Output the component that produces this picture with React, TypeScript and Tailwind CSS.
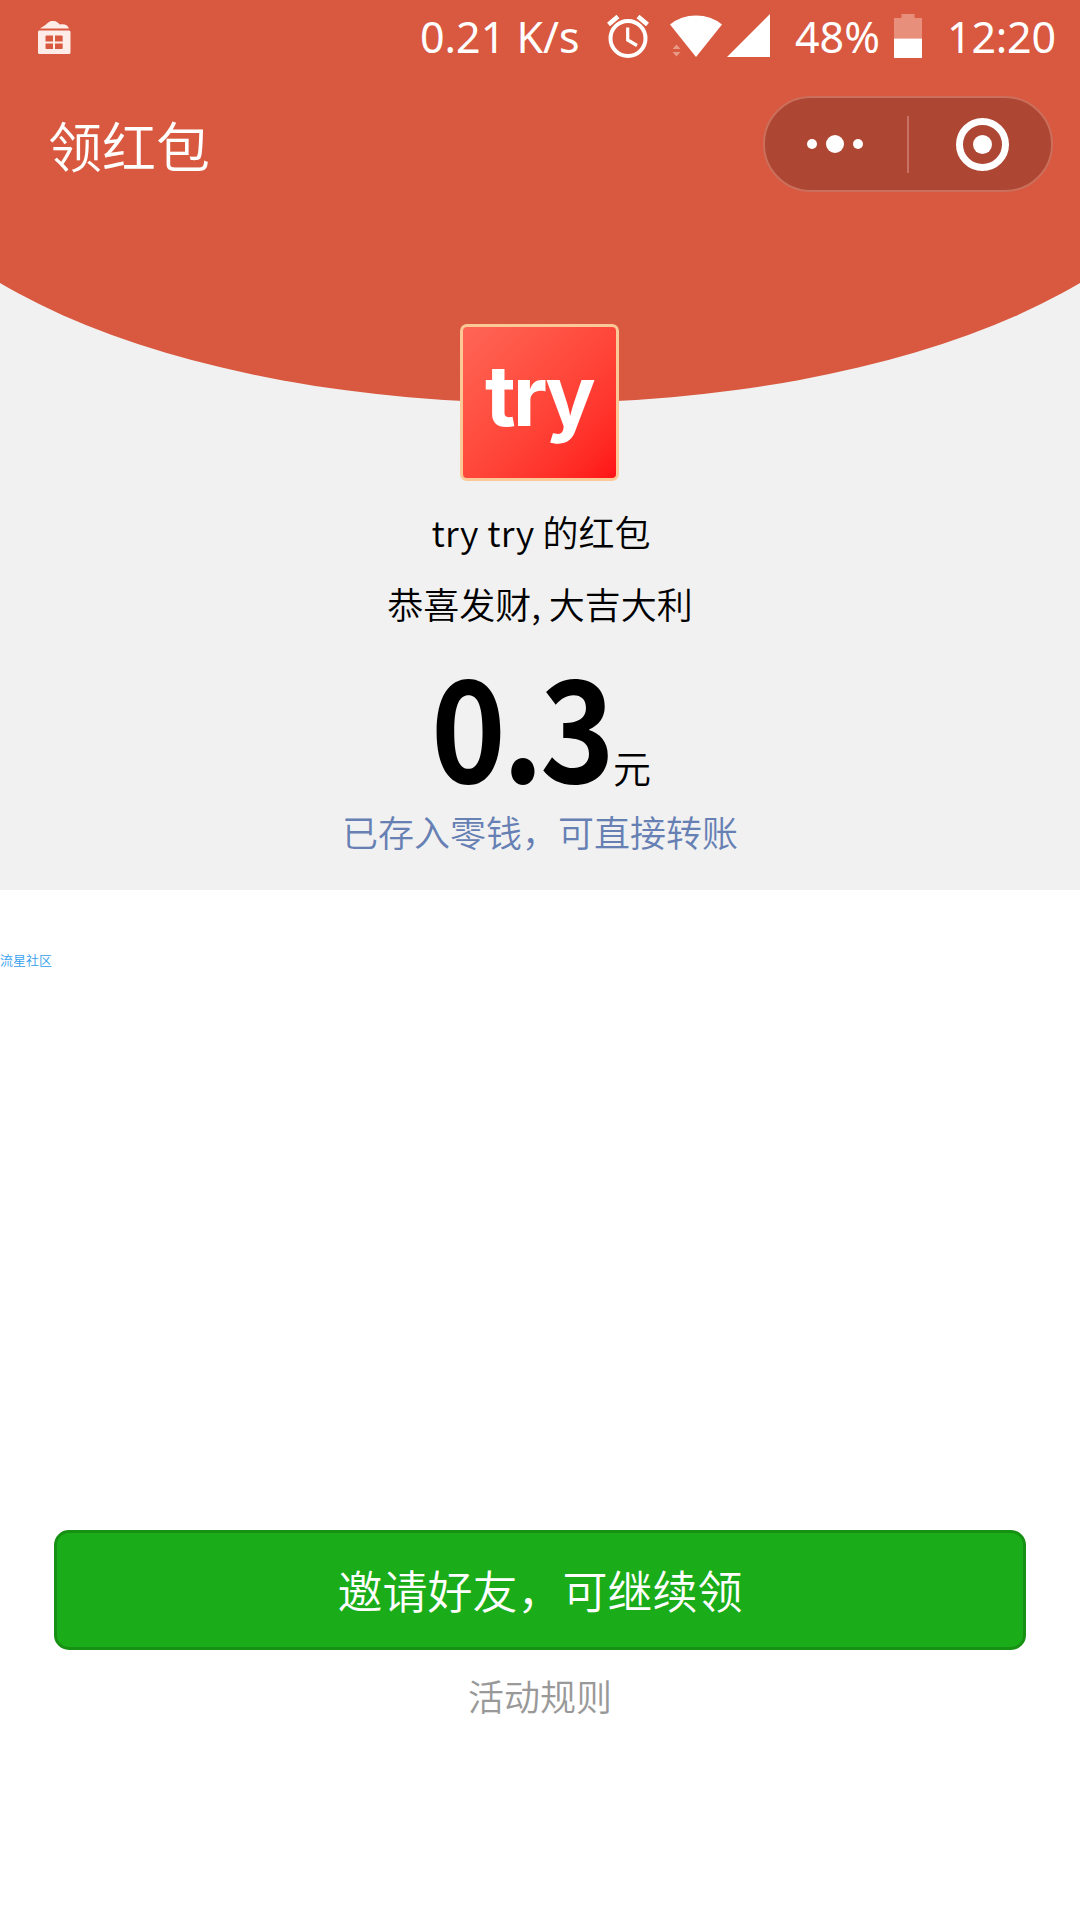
import React from "react";

function StatusBar() {
  return (
    <div className="flex h-[73px] items-center text-[43px] font-normal leading-none text-white font-['Noto_Sans',sans-serif]">
      <svg className="ml-[37px] h-[36px] w-[34px]" viewBox="0 0 34 36" fill="#fdece8">
        <path d="M3 9.500L8 6.200C11 4 12 2 16 2C20 2 21 4 23 5.600C27 4.500 31 6 32 9.500Z" />
        <path
          fillRule="evenodd"
          d="M2 11.500H32Q33.500 11.500 33.500 13V33.500Q33.500 35 32 35H2.500Q1 35 1 33.500V13Q1 11.500 2 11.500ZM9.500 16.500Q8.500 16.500 8.500 17.500V22.500H16V16.500ZM18 16.500V22.500H25.700V17.500Q25.700 16.500 24.700 16.500ZM8.500 24.500V29Q8.500 30 9.500 30H16V24.500ZM18 24.500V30H24.700Q25.700 30 25.700 29V24.500Z"
        />
      </svg>
      <span className="ml-[349px] w-[163px] whitespace-nowrap">0.21 K/s</span>
      <svg className="-mt-[2px] ml-[24px] h-[44px] w-[42px]" viewBox="0 0 42 44" fill="none" stroke="#fff">
        <circle cx="21" cy="24.500" r="17.500" strokeWidth="4" />
        <path d="M1.500 10.500L11 2.500M31 2.500L40.500 10.500" strokeWidth="4.500" />
        <path d="M20.700 13.500V26L30 31.500" strokeWidth="3.200" />
      </svg>
      <svg className="-mt-[2px] ml-[19px] h-[44px] w-[54px]" viewBox="0 0 54 44" fill="#fff">
        <path d="M2 10.500Q13 1.500 28 1.500Q43 1.500 54 10.500L28 43Z" />
        <path d="M4.500 35L8.500 30.500L12.500 35ZM4.500 38H12.500L8.500 42.500Z" fill="#e99a87" />
      </svg>
      <svg className="-mt-[2px] ml-[5px] h-[43px] w-[43px]" viewBox="0 0 43 43" fill="#fff">
        <path d="M0 43L43 0V43Z" />
      </svg>
      <span className="ml-[25px] w-[87px] whitespace-nowrap">48%</span>
      <svg className="-mt-[2px] ml-[12px] h-[44px] w-[28px]" viewBox="0 0 28 44">
        <path d="M7.500 0H20.500V4H28V24.500H0V4H7.500Z" fill="#e88f7b" />
        <path d="M0 24.500H28V44H0Z" fill="#fff" />
      </svg>
      <span className="ml-[25px] whitespace-nowrap tracking-[-0.2px]">12:20</span>
    </div>
  );
}

function Capsule() {
  return (
    <div className="flex h-[96px] w-[290px] items-center rounded-full border-2 border-[#cb6f5c] bg-[#ad4633]">
      <div className="flex w-[142px] items-center justify-center gap-[9px] pr-[2px]">
        <i className="size-[10px] rounded-full bg-white" />
        <i className="size-[18px] rounded-full bg-white" />
        <i className="size-[10px] rounded-full bg-white" />
      </div>
      <div className="h-[57px] w-[2px] bg-[#c77262]" />
      <div className="flex flex-1 justify-center pl-[5px]">
        <div className="flex size-[53px] items-center justify-center rounded-full border-[7px] border-white">
          <i className="size-[19px] rounded-full bg-white" />
        </div>
      </div>
    </div>
  );
}

export default function App() {
  return (
    <div className="flex h-[1920px] w-[1080px] flex-col overflow-hidden bg-white font-['Noto_Sans_CJK_SC',sans-serif] text-[36px] font-[350] text-black">
      <section className="flex h-[890px] shrink-0 flex-col items-center bg-[#f1f1f1]">
        <header className="h-[403px] w-[1350px] shrink-0 rounded-b-[675px_300px] bg-[#d8593f] px-[135px]">
          <StatusBar />
          <div className="mt-[23px] flex items-center justify-between pl-[48px] pr-[27px]">
            <h1 className="pt-[2px] text-[54px] leading-none text-white">领红包</h1>
            <Capsule />
          </div>
        </header>
        <div className="-mt-[79px] mr-[2px] flex h-[157px] w-[159px] shrink-0 items-center justify-center rounded-[7px] border-[3px] border-[#fbc997] bg-linear-to-br from-[#ff6555] to-[#ff1015]">
          <span className="pb-[14px] font-['Inter',sans-serif] text-[84px] font-bold leading-none tracking-[-3px] text-white">try</span>
        </div>
        <p className="mt-[25px] h-[50px] pl-[2px] leading-[50px]">
          <span className="tracking-[0.3px]">try try</span> 的红包
        </p>
        <p className="mt-[22px] h-[50px] leading-[50px]">恭喜发财, 大吉大利</p>
        <div className="mt-[32px] flex h-[124px] w-[222px] items-baseline">
          <span className="ml-[2px] w-[184px] origin-left scale-x-90 text-[141px] font-bold leading-[124px] tracking-[-4px]">0.3</span>
          <span className="-ml-[2px] text-[38px] leading-none">元</span>
        </div>
        <p className="mt-[22px] h-[50px] leading-[50px] text-[#6680b4]">已存入零钱，可直接转账</p>
      </section>
      <div className="mt-[61px] h-[18px] text-[13px] leading-[18px] text-[#35a0ee]">流星社区</div>
      <button className="mx-[54px] mt-[561px] h-[120px] shrink-0 rounded-[15px] border-[3px] border-[#179113] bg-[#1aad19] pb-[1px] text-[45px] leading-none text-white">
        邀请好友，可继续领
      </button>
      <a className="mt-[9px] text-center leading-[72px] text-[#999]">活动规则</a>
    </div>
  );
}
